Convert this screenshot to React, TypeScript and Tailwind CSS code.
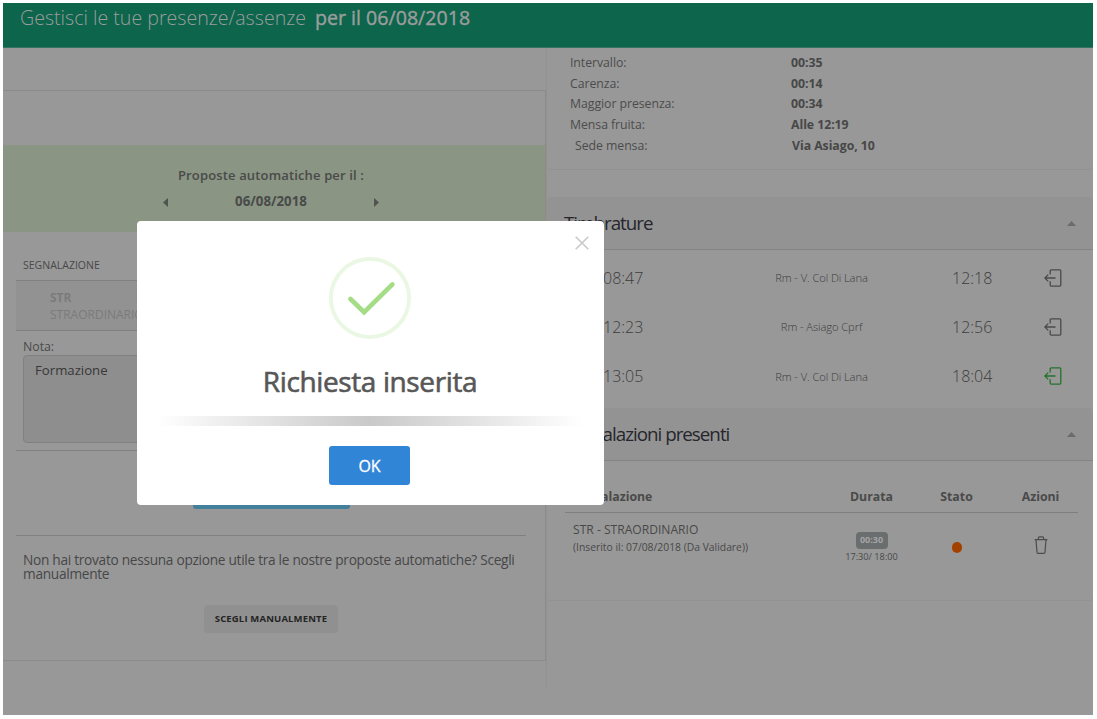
import React from "react";

type Punch = { start: string; place: string; end: string; tone: string };

const summary = [
  ["Intervallo:", "00:35"],
  ["Carenza:", "00:14"],
  ["Maggior presenza:", "00:34"],
  ["Mensa fruita:", "Alle 12:19"],
  ["Sede mensa:", "Via Asiago, 10"],
];

const punches: Punch[] = [
  { start: "08:47", place: "Rm - V. Col Di Lana", end: "12:18", tone: "text-[#4a4a4a]" },
  { start: "12:23", place: "Rm - Asiago Cprf", end: "12:56", tone: "text-[#4a4a4a]" },
  { start: "13:05", place: "Rm - V. Col Di Lana", end: "18:04", tone: "text-[#25722a]" },
];

function ExitIcon() {
  return (
    <svg width="18" height="18" viewBox="0 0 18 18" fill="none" stroke="currentColor" strokeWidth="1.3">
      <path d="M6.2 5.5V1.9Q6.2 .8 7.2 .8H15.8Q16.8 .8 16.8 1.9V16.1Q16.8 17.2 15.8 17.2H7.2Q6.2 17.2 6.2 16.1V12.2" />
      <path d="M11.5 9H1M4.2 5.6L.9 9L4.2 12.4" />
    </svg>
  );
}

function TrashIcon() {
  return (
    <svg width="14" height="18" viewBox="0 0 14 18" fill="none" stroke="#4c4c4c" strokeWidth="1.2">
      <path d="M.6 3.7H13.4M4.4 3.5V1.8Q4.4 .8 5.3 .8H8.7Q9.6 .8 9.6 1.8V3.5M2 3.9L3 16.2Q3.1 17.3 4 17.3H10Q10.9 17.3 11 16.2L12 3.9" />
    </svg>
  );
}

function Caret({ className, points, w, h }: { className?: string; points: string; w: number; h: number }) {
  return (
    <svg className={className} width={w} height={h} viewBox={`0 0 ${w} ${h}`} fill="currentColor">
      <polygon points={points} />
    </svg>
  );
}

function SectionHeader({ title }: { title: string }) {
  return (
    <div className="flex h-[53px] items-center justify-between rounded-t border-b border-[#848484] bg-[#939393] pl-[17px] pr-[17px]">
      <h2 className="text-[18.8px] leading-6 tracking-[-1px] text-[#26262c]">{title}</h2>
      <Caret className="text-[#6b6b6b]" points="0,5 4.5,0 9,5" w={9} h={5} />
    </div>
  );
}

function LeftColumn() {
  return (
    <div className="h-[640px] w-[544px] shrink-0 border-r border-[#929292]">
      <div className="mt-[42px] h-[571px] w-[543px] border-y border-r border-[#8b8b8b] pt-[54px]">
        <div className="h-[87px] bg-[#8a9583] pt-5 text-[#494a4a]">
          <div className="pr-[6px] text-center text-[13px] font-semibold leading-5 tracking-[0.15px]">Proposte automatiche per il :</div>
          <div className="mt-[5px] flex h-5 items-center pl-[160px]">
            <Caret className="mt-1 text-[#505350]" points="5,0 0,4.5 5,9" w={5} h={9} />
            <span className="w-[206px] pt-px text-center text-[13.3px] font-bold leading-5">06/08/2018</span>
            <Caret className="mt-1 text-[#505350]" points="0,0 5,4.5 0,9" w={5} h={9} />
          </div>
        </div>
        <div className="ml-[13px] w-[510px]">
          <div className="h-[49px] border-b border-[#808080] pl-[7px] pt-[25px] text-[10.5px] leading-4 text-[#484848]">SEGNALAZIONE</div>
          <div className="h-[50px] border-b border-[#808080] bg-[#929292] pl-[34px] pt-[8px] text-[12px] leading-[17px] text-[#7b7b7b]">
            <div className="font-bold">STR</div>
            <div>STRAORDINARIO</div>
          </div>
          <div className="h-[120px] border-b border-[#808080] pl-[7px] pt-[7px] text-[#4a4a4a]">
            <div className="h-[17px] text-[12.3px] leading-[17px]">Nota:</div>
            <div className="h-[88px] w-[488px] rounded border-[1.5px] border-[#808080] bg-[#8e8e8e] pl-[11px] pt-[4px] text-[13.2px] leading-5 text-[#383838]">Formazione</div>
          </div>
          <div className="flex h-[85px] justify-center border-b border-[#808080] pt-[18px]">
            <div className="h-10 w-[157px] rounded-[3px] bg-[#43809c]" />
          </div>
        </div>
        <p className="ml-5 mt-[17px] w-[510px] text-[13.7px] leading-[14px] tracking-[-0.29px] text-[#474747]">
          Non hai trovato nessuna opzione utile tra le nostre proposte automatiche? Scegli manualmente
        </p>
        <button className="ml-[201px] mt-[24px] h-7 w-[134px] rounded-sm bg-[#909090] text-[9.5px] font-bold tracking-[0.16px] text-[#242424]">SCEGLI MANUALMENTE</button>
      </div>
    </div>
  );
}

function RightColumn() {
  return (
    <div className="min-w-0 flex-1">
      <div className="h-[122px] rounded-b border-b border-[#919191] pl-[23px] pt-[5px]">
        {summary.map(([label, value], i) => (
          <div key={label} className="flex h-[20.6px] items-center text-[12.3px] leading-5 text-[#4c4c4c]">
            <span className={i === 4 ? "w-[222px] pl-[5px] tracking-[-0.06px]" : "w-[221px] tracking-[-0.06px]"}>{label}</span>
            <span className="font-bold tracking-[-0.05px] text-[#474747]">{value}</span>
          </div>
        ))}
      </div>
      <div className="mt-[27px]">
        <SectionHeader title="Timbrature" />
        <div className="flex h-[158px] flex-col pt-[3px]">
          {punches.map((p) => (
            <div key={p.start} className="flex h-[49.4px] items-center text-[#3c3c3c]">
              <span className="w-[155px] pl-[56px] text-[16px] font-light">{p.start}</span>
              <span className="w-[239px] pt-px text-center text-[11.2px] font-light tracking-[-0.1px]">{p.place}</span>
              <span className="w-[103px] pl-[11px] text-[16px] font-light">{p.end}</span>
              <span className={p.tone}><ExitIcon /></span>
            </div>
          ))}
        </div>
        <SectionHeader title="Segnalazioni presenti" />
        <div className="h-[140px] rounded-b border-b border-[#929292] pl-[18px] pr-[15px] pt-[23px]">
          <div className="flex h-[29px] border-b-[1.5px] border-[#7f7f7f] text-[12.3px] font-bold leading-[25px] text-[#4a4a4a]">
            <span className="w-[263px] pl-[7px]">Segnalazione</span>
            <span className="w-[87px] text-center">Durata</span>
            <span className="w-[83px] text-center">Stato</span>
            <span className="w-[80px] pl-[5px] text-center">Azioni</span>
          </div>
          <div className="flex text-[#484848]">
            <div className="w-[263px] pl-[8px] pt-[8px]">
              <div className="text-[12.1px] leading-[18px]">STR - STRAORDINARIO</div>
              <div className="text-[10.35px] leading-[16px]">(Inserito il: 07/08/2018 (Da Validare))</div>
            </div>
            <div className="flex w-[87px] flex-col items-center pt-[19px]">
              <span className="h-[17px] w-[32px] rounded-sm bg-[#6a6e6f] text-center text-[9px] font-bold leading-[16px] text-[#a5a5a5]">00:30</span>
              <span className="mt-[2px] text-[9.2px] leading-3">17:30/ 18:00</span>
            </div>
            <div className="flex w-[83px] justify-center pt-[29px]">
              <span className="h-[11px] w-[10px] rounded-full bg-[#a34200]" />
            </div>
            <div className="flex w-[80px] justify-center pl-[5px] pt-[23px]"><TrashIcon /></div>
          </div>
        </div>
      </div>
    </div>
  );
}

function SuccessModal() {
  return (
    <div className="absolute left-[136.5px] top-[221px] flex h-[284px] w-[467px] flex-col items-center rounded-[4px] bg-white pt-[36px]">
      <svg className="absolute right-[15px] top-[15px]" width="14" height="14" viewBox="0 0 14 14" stroke="#c9c9c9" strokeWidth="1.6">
        <path d="M.7 .7L13.3 13.3M13.3 .7L.7 13.3" />
      </svg>
      <svg className="-ml-px" width="82" height="82" viewBox="0 0 82 82" fill="none">
        <circle cx="41" cy="41" r="39.1" stroke="#eaf7e3" strokeWidth="3.8" />
        <path d="M21.5 42L35.1 55.2L63.4 27.4" stroke="#a5dc86" strokeWidth="4.7" strokeLinecap="round" />
      </svg>
      <h1 className="mt-[24px] text-[28px] font-medium leading-9 tracking-[-0.38px] text-[#575757] [-webkit-text-stroke:0.6px]">Richiesta inserita</h1>
      <div className="mt-[17px] h-[10px] w-[426px] bg-gradient-to-r from-white via-[#c9c9c9] to-white" />
      <button className="-ml-px mt-[20px] h-[39px] w-[81px] rounded-[3px] bg-[#3085d6] text-[16px] font-medium tracking-[-0.2px] text-white [-webkit-text-stroke:0.3px]">OK</button>
    </div>
  );
}

export default function App() {
  return (
    <div className="h-[719px] w-[1097px] overflow-hidden bg-white pl-[3px] pt-[3px] font-['Open_Sans',sans-serif]">
      <div className="h-[712px] w-[1090px] overflow-hidden bg-[#989898]">
        <header className="h-[45px] border-b border-[#347563] bg-[#0d654c] pl-[17px] text-[19.6px] leading-[29px] text-[#9b9d9c]">
          <span className="font-light">Gestisci le tue presenze/assenze</span>
          <span className="ml-[9px] font-medium [-webkit-text-stroke:0.4px]">per il 06/08/2018</span>
        </header>
        <main className="flex">
          <LeftColumn />
          <RightColumn />
        </main>
      </div>
      <SuccessModal />
    </div>
  );
}
